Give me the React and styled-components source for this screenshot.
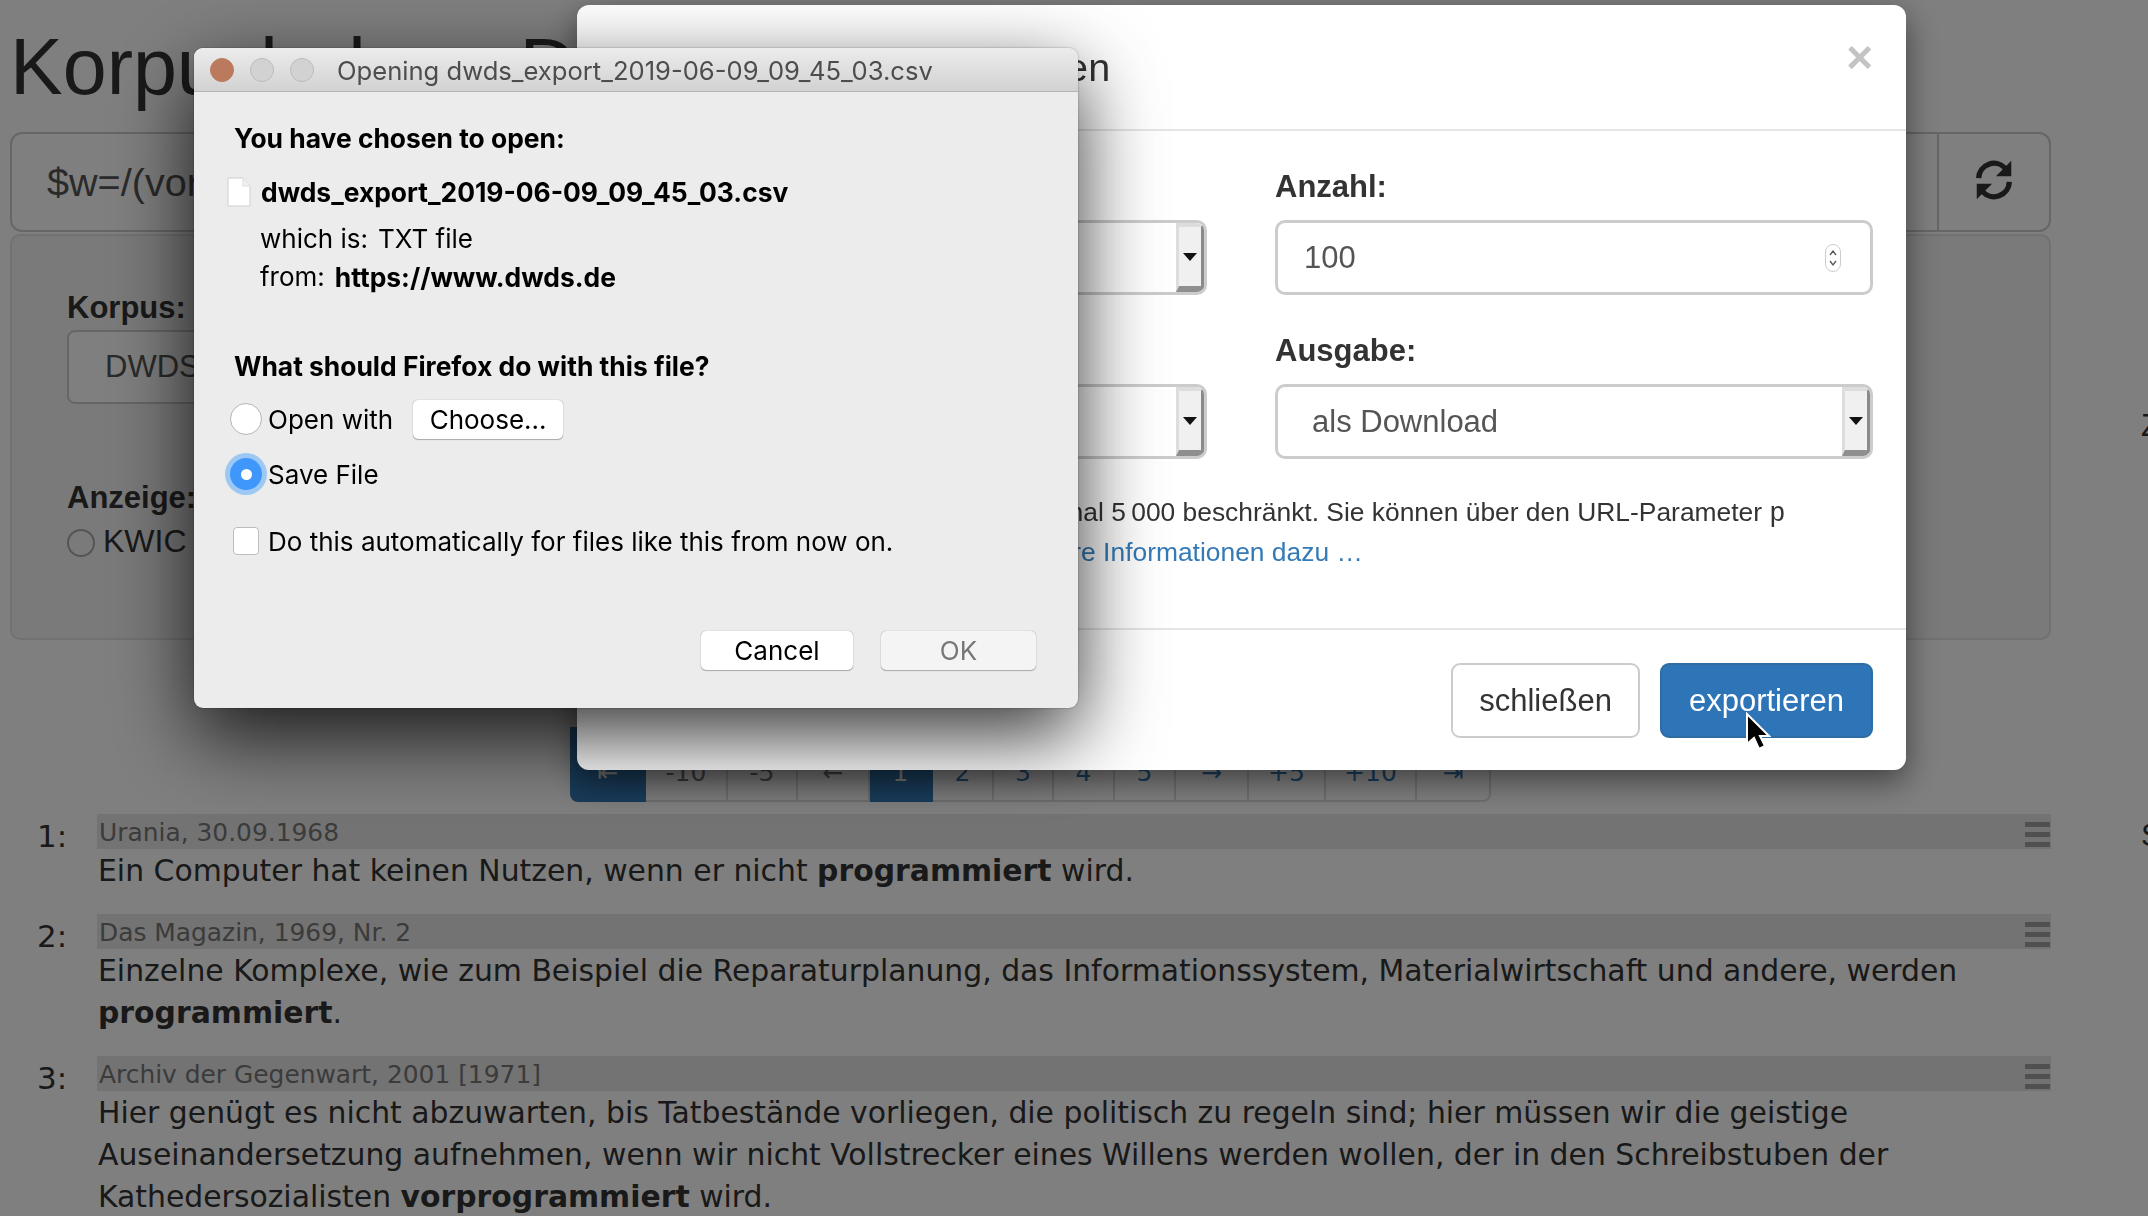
import styled, { createGlobalStyle } from "styled-components";

const GlobalStyle = createGlobalStyle`
  html, body {
    margin: 0;
    height: 100%;
    overflow: hidden;
    background: #fff;
  }
  * { box-sizing: border-box; }
`;

const Page = styled.div`
  display: flex;
  width: 2400px;
  height: 1216px;
  padding-left: 10px;
  font-family: "Liberation Sans", Arial, sans-serif;
  font-size: 31px;
  color: #333;
`;

const Main = styled.div`
  width: 2041px;
  flex: none;
`;

const Aside = styled.aside`
  margin-left: 90px;
  padding-top: 404px;
  display: flex;
  flex-direction: column;
  gap: 366px;
  line-height: 44px;
`;

const Title = styled.h1`
  margin: 23px 0 22px;
  font-size: 79px;
  line-height: 87px;
  font-weight: 400;
`;

const SearchBar = styled.div`
  display: flex;
  height: 100px;
  border: 2px solid #ccc;
  border-radius: 12px;
  color: #555;
  font-size: 39.6px;
`;

const SearchInput = styled.div`
  flex: 1;
  padding: 0 35px;
  line-height: 96px;
`;

const SearchButton = styled.div`
  width: 112px;
  padding-bottom: 4px;
  border-left: 2px solid #ccc;
  display: flex;
  align-items: center;
  justify-content: center;
  color: #333;
`;

const Well = styled.div`
  margin-top: 2px;
  height: 406px;
  padding: 50px 55px 0;
  background: #f5f5f5;
  border: 2px solid #e3e3e3;
  border-radius: 10px;
`;

const FieldLabel = styled.div`
  font-weight: 700;
  line-height: 44px;
`;

const WellSelect = styled.div`
  width: 500px;
  height: 74px;
  margin-bottom: 72px;
  padding-left: 36px;
  line-height: 70px;
  color: #555;
  background: #fff;
  border: 2px solid #ccc;
  border-radius: 8px;
`;

const RadioLine = styled.div`
  display: flex;
  align-items: center;
  gap: 8px;
  margin-top: -1px;
  line-height: 44px;
  font-size: 32px;
`;

const PageRadio = styled.span`
  width: 28px;
  height: 28px;
  margin-top: 4px;
  border-radius: 50%;
  background: #f4f4f4;
  border: 2px solid #aaa;
`;

const Pagination = styled.div`
  display: flex;
  width: 921px;
  height: 75px;
  margin: 87px auto 12px 560px;
`;

const PageItem = styled.div`
  width: ${(p) => p.$w}px;
  padding-top: 16px;
  display: flex;
  align-items: center;
  justify-content: center;
  background: ${(p) => (p.$active ? "#337ab7" : "#fff")};
  color: ${(p) => (p.$active ? "#fff" : p.$muted ? "#777" : "#337ab7")};
  border: 2px solid ${(p) => (p.$active ? "#337ab7" : "#ddd")};
  border-left-width: ${(p) => (p.$first ? 2 : 0)}px;
  border-radius: ${(p) => (p.$first ? "0 0 0 8px" : p.$last ? "0 0 8px 0" : "0")};
  font-family: "DejaVu Sans", sans-serif;
  font-size: 25px;
`;

const Hit = styled.div`
  display: grid;
  grid-template-columns: 87px 1fr;
  margin-bottom: 23px;
`;

const HitNumber = styled.div`
  padding-left: 27px;
  line-height: 44px;
  font-family: "DejaVu Sans", sans-serif;
  font-size: 31px;
`;

const HitHead = styled.div`
  display: flex;
  justify-content: space-between;
  height: 35px;
  padding: 0 1px 0 2px;
  background: #e6e6e6;
  color: #777;
  font-family: "DejaVu Sans", sans-serif;
  font-size: 24.9px;
  line-height: 37px;
`;

const HitMenu = styled.div`
  display: flex;
  flex-direction: column;
  gap: 5px;
  width: 25px;
  padding-top: 8px;
`;

const HitMenuBar = styled.span`
  height: 5px;
  background: #a0a0a0;
`;

const HitLines = styled.div`
  padding-top: 1px;
  margin-bottom: -1px;
`;

const HitText = styled.div`
  font-family: "DejaVu Sans", sans-serif;
  font-size: 29.85px;
  line-height: 42px;
  padding-left: 1px;
  white-space: nowrap;
`;

const Backdrop = styled.div`
  position: fixed;
  inset: 0;
  background: rgba(0, 0, 0, 0.5);
`;

const Modal = styled.div`
  position: fixed;
  left: 577px;
  top: 5px;
  width: 1329px;
  height: 765px;
  display: flex;
  flex-direction: column;
  background: #fff;
  border-radius: 12px;
  box-shadow: 0 11px 33px rgba(0, 0, 0, 0.5);
  font-family: "Liberation Sans", Arial, sans-serif;
  font-size: 31px;
  color: #333;
`;

const ModalHeader = styled.div`
  height: 126px;
  flex: none;
  padding: 0 33px;
  display: flex;
  align-items: center;
  justify-content: space-between;
  border-bottom: 2px solid #e5e5e5;
`;

const ModalTitle = styled.div`
  font-size: 39.6px;
  letter-spacing: 0.3px;
`;

const Close = styled.div`
  font-size: 46px;
  font-weight: 700;
  color: #c4c4c4;
  margin-top: -20px;
`;

const ModalBody = styled.div`
  flex: 1;
  padding: 34px 33px 0;
`;

const FormGrid = styled.div`
  display: grid;
  grid-template-columns: 597px 598px;
  column-gap: 68px;
  row-gap: 34px;
`;

const Control = styled.div`
  display: flex;
  height: 75px;
  margin-top: 11px;
  background: #fff;
  border: 3px solid #ccc;
  border-radius: 10px;
  color: #555;
  line-height: 70px;
  overflow: hidden;
`;

const ControlValue = styled.div`
  flex: 1;
  padding-left: ${(p) => p.$inset}px;
`;

const SelectArrow = styled.div`
  width: 28px;
  display: flex;
  align-items: center;
  justify-content: center;
  background: #f0f0f0;
  border-left: 3px solid #ddd;
  border-right: 3px solid #8a8a8a;
  border-top: 4px solid #ddd;
  border-bottom: 6px solid #8f8f8f;

  &::after {
    content: "";
    border: 7px solid transparent;
    border-top: 8px solid #111;
    border-bottom: 0;
  }
`;

const Spinner = styled.svg`
  align-self: center;
  margin-right: 29px;
`;

const Note = styled.p`
  margin: 34px 0 0;
  padding-left: 3px;
  font-size: 26.4px;
  line-height: 38px;
  white-space: nowrap;
`;

const NoteCode = styled.code`
  font-family: "Liberation Mono", monospace;
  font-size: 27px;
`;

const NoteLink = styled.span`
  margin-left: 5px;
  color: #337ab7;
`;

const ModalFooter = styled.div`
  height: 142px;
  flex: none;
  padding: 33px 33px 0;
  display: flex;
  justify-content: flex-end;
  gap: 20px;
  border-top: 2px solid #e5e5e5;
`;

const FooterButton = styled.div`
  height: 75px;
  padding: 0 ${(p) => (p.$primary ? 27 : 26)}px;
  display: flex;
  align-items: center;
  border-radius: 9px;
  border: 2px solid ${(p) => (p.$primary ? "#2e6da4" : "#ccc")};
  background: ${(p) => (p.$primary ? "#2e75b8" : "#fff")};
  color: ${(p) => (p.$primary ? "#fff" : "#333")};
`;

const Cursor = styled.svg`
  position: fixed;
  left: 1745px;
  top: 712px;
`;

const Dialog = styled.div`
  position: fixed;
  left: 194px;
  top: 48px;
  width: 884px;
  height: 660px;
  background: #ececec;
  border-radius: 9px;
  box-shadow: 0 28px 80px rgba(0, 0, 0, 0.8), 0 0 2px rgba(0, 0, 0, 0.4);
  font-family: "Inter", "Liberation Sans", sans-serif;
  font-size: 26px;
  color: #000;
`;

const TitleBar = styled.div`
  height: 44px;
  display: flex;
  align-items: center;
  padding-left: 16px;
  gap: 16px;
  background: linear-gradient(#ececec, #d2d2d2);
  border-bottom: 1px solid #b4b4b4;
  border-radius: 9px 9px 0 0;
`;

const Light = styled.span`
  width: 24px;
  height: 24px;
  border-radius: 50%;
  background: ${(p) => (p.$close ? "#bb7a5d" : "#d2d2d2")};
  border: 1px solid ${(p) => (p.$close ? "#bb7a5d" : "#bcbcbc")};
`;

const WindowTitle = styled.div`
  margin: 2px 0 0 7px;
  color: #4d4d4d;
  font-size: 25.6px;
  white-space: nowrap;
`;

const DialogBody = styled.div`
  padding: 31px 0 0 40px;
  display: flex;
  flex-direction: column;
`;

const Strong = styled.div`
  font-size: 26.4px;
  font-weight: 700;
  line-height: 30px;
`;

const FileRow = styled.div`
  display: flex;
  align-items: center;
  gap: 10px;
  margin: 24px 0 0 -7px;
  height: 30px;
`;

const Meta = styled.div`
  display: flex;
  gap: 10px;
  margin: ${(p) => p.$top}px 0 0 26px;
  line-height: 30px;
`;

const Bold = styled.span`
  font-size: 26.4px;
  font-weight: 700;
`;

const Question = styled(Strong)`
  margin-top: 59px;
`;

const OptionRow = styled.div`
  display: flex;
  align-items: center;
  height: 40px;
  margin: ${(p) => p.$top}px 0 0 -4px;
  gap: 6px;
`;

const Radio = styled.span`
  width: 32px;
  height: 32px;
  border-radius: 50%;
  background: #fff;
  border: 1px solid #b5b5b5;
`;

const RadioOn = styled.span`
  width: 32px;
  height: 32px;
  display: flex;
  align-items: center;
  justify-content: center;
  border-radius: 50%;
  background: #3f97fb;
  box-shadow: 0 0 0 5px #9cc8f3;

  &::after {
    content: "";
    width: 11px;
    height: 11px;
    border-radius: 50%;
    background: #fff;
  }
`;

const Check = styled.span`
  width: 26px;
  height: 28px;
  margin: 0 3px 0 3px;
  border-radius: 4px;
  background: #fff;
  border: 1px solid #bdbdbd;
`;

const MacButton = styled.div`
  height: 39px;
  width: ${(p) => p.$w}px;
  margin-left: ${(p) => p.$offset || 0}px;
  display: flex;
  align-items: center;
  justify-content: center;
  background: ${(p) => (p.$disabled ? "#f4f4f4" : "#fff")};
  color: ${(p) => (p.$disabled ? "#777" : "#000")};
  border-radius: 5px;
  box-shadow: 0 0 1px rgba(0, 0, 0, 0.45), 0 1px 1px rgba(0, 0, 0, 0.25);
`;

const DialogActions = styled.div`
  display: flex;
  justify-content: flex-end;
  gap: 28px;
  margin: 70px 42px 0 0;
`;

const hits = [
  {
    source: "Urania, 30.09.1968",
    lines: [<>Ein Computer hat keinen Nutzen, wenn er nicht <b>programmiert</b> wird.</>],
  },
  {
    source: "Das Magazin, 1969, Nr. 2",
    lines: [
      "Einzelne Komplexe, wie zum Beispiel die Reparaturplanung, das Informationssystem, Materialwirtschaft und andere, werden",
      <><b>programmiert</b>.</>,
    ],
  },
  {
    source: "Archiv der Gegenwart, 2001 [1971]",
    lines: [
      "Hier genügt es nicht abzuwarten, bis Tatbestände vorliegen, die politisch zu regeln sind; hier müssen wir die geistige",
      "Auseinandersetzung aufnehmen, wenn wir nicht Vollstrecker eines Willens werden wollen, der in den Schreibstuben der",
      <>Kathedersozialisten <b>vorprogrammiert</b> wird.</>,
    ],
  },
];

const pages = [
  { label: "⇤", w: 76, active: true, first: true },
  { label: "-10", w: 82, muted: true },
  { label: "-5", w: 70, muted: true },
  { label: "←", w: 72, muted: true },
  { label: "1", w: 63, active: true },
  { label: "2", w: 61 },
  { label: "3", w: 60 },
  { label: "4", w: 61 },
  { label: "5", w: 61 },
  { label: "→", w: 73 },
  { label: "+5", w: 77 },
  { label: "+10", w: 91 },
  { label: "⇥", w: 74, last: true },
];

const RefreshIcon = () => (
  <svg width="46" height="46" viewBox="0 0 24 24" fill="none" stroke="currentColor" strokeWidth="2.8">
    <path d="M4 11a8 8 0 0 1 14-5l2 2" />
    <path d="M20 13a8 8 0 0 1-14 5l-2-2" />
    <path d="M21 2v8h-8z" fill="currentColor" stroke="none" />
    <path d="M3 22v-8h8z" fill="currentColor" stroke="none" />
  </svg>
);

const FileIcon = () => (
  <svg width="24" height="30" viewBox="0 0 24 30">
    <path d="M1 1h15l7 8v20H1z" fill="#fff" stroke="#cfcfcf" />
    <path d="M16 1v8h7" fill="#f1f1f1" stroke="#dcdcdc" />
  </svg>
);

const App = () => (
  <>
    <GlobalStyle />
    <Page>
      <Main>
        <Title>Korpusbelege DWDS</Title>
        <SearchBar>
          <SearchInput>$w=/(vor)?programmiert/</SearchInput>
          <SearchButton>
            <RefreshIcon />
          </SearchButton>
        </SearchBar>
        <Well>
          <FieldLabel>Korpus:</FieldLabel>
          <WellSelect>DWDS-Kernkorpus</WellSelect>
          <FieldLabel>Anzeige:</FieldLabel>
          <RadioLine>
            <PageRadio />
            KWIC
          </RadioLine>
        </Well>
        <Pagination>
          {pages.map((p) => (
            <PageItem key={p.label} $w={p.w} $active={p.active} $muted={p.muted} $first={p.first} $last={p.last}>
              {p.label}
            </PageItem>
          ))}
        </Pagination>
        {hits.map((hit, i) => (
          <Hit key={hit.source}>
            <HitNumber>{i + 1}:</HitNumber>
            <div>
              <HitHead>
                {hit.source}
                <HitMenu>
                  <HitMenuBar />
                  <HitMenuBar />
                  <HitMenuBar />
                </HitMenu>
              </HitHead>
              <HitLines>
                {hit.lines.map((line, n) => (
                  <HitText key={n}>{line}</HitText>
                ))}
              </HitLines>
            </div>
          </Hit>
        ))}
      </Main>
      <Aside>
        <span>Zeitverlauf</span>
        <span>Suche</span>
      </Aside>
    </Page>

    <Backdrop />

    <Modal>
      <ModalHeader>
        <ModalTitle>Suchergebnisse exportieren</ModalTitle>
        <Close>×</Close>
      </ModalHeader>
      <ModalBody>
        <FormGrid>
          <div>
            <FieldLabel>Format:</FieldLabel>
            <Control>
              <ControlValue $inset={26}>CSV</ControlValue>
              <SelectArrow />
            </Control>
          </div>
          <div>
            <FieldLabel>Anzahl:</FieldLabel>
            <Control>
              <ControlValue $inset={26}>100</ControlValue>
              <Spinner width="16" height="28" viewBox="0 0 16 28" fill="none">
                <rect x="0.5" y="0.5" width="15" height="27" rx="7.5" fill="#fff" stroke="#ccc" />
                <path d="M5 11l3-4 3 4M5 17l3 4 3-4" stroke="#555" strokeWidth="1.3" />
              </Spinner>
            </Control>
          </div>
          <div>
            <FieldLabel>Sortierung:</FieldLabel>
            <Control>
              <ControlValue $inset={36}>Datum</ControlValue>
              <SelectArrow />
            </Control>
          </div>
          <div>
            <FieldLabel>Ausgabe:</FieldLabel>
            <Control>
              <ControlValue $inset={34}>als Download</ControlValue>
              <SelectArrow />
            </Control>
          </div>
        </FormGrid>
        <Note>
          Die Anzahl der Suchtreffer ist auf maximal 5{"\u2009"}000 beschränkt. Sie können über den URL-Parameter <NoteCode>p</NoteCode>
          <br />
          die Seitengröße auch anpassen. <NoteLink>Weitere Informationen dazu …</NoteLink>
        </Note>
      </ModalBody>
      <ModalFooter>
        <FooterButton>schließen</FooterButton>
        <FooterButton $primary>exportieren</FooterButton>
      </ModalFooter>
    </Modal>

    <Cursor width="26" height="40" viewBox="0 0 26 40">
      <path d="M2 2v30l7-6 5 11 6-3-5-10h9z" fill="#000" stroke="#fff" strokeWidth="2" />
    </Cursor>

    <Dialog>
      <TitleBar>
        <Light $close />
        <Light />
        <Light />
        <WindowTitle>Opening dwds_export_2019-06-09_09_45_03.csv</WindowTitle>
      </TitleBar>
      <DialogBody>
        <Strong>You have chosen to open:</Strong>
        <FileRow>
          <FileIcon />
          <Bold>dwds_export_2019-06-09_09_45_03.csv</Bold>
        </FileRow>
        <Meta $top={17}>which is: <span>TXT file</span></Meta>
        <Meta $top={8}>from: <Bold>https://www.dwds.de</Bold></Meta>
        <Question>What should Firefox do with this file?</Question>
        <OptionRow $top={18}>
          <Radio />
          Open with
          <MacButton $w={150} $offset={14}>Choose...</MacButton>
        </OptionRow>
        <OptionRow $top={15}>
          <RadioOn />
          Save File
        </OptionRow>
        <OptionRow $top={27}>
          <Check />
          Do this automatically for files like this from now on.
        </OptionRow>
        <DialogActions>
          <MacButton $w={152}>Cancel</MacButton>
          <MacButton $w={155} $disabled>OK</MacButton>
        </DialogActions>
      </DialogBody>
    </Dialog>
  </>
);

export default App;
